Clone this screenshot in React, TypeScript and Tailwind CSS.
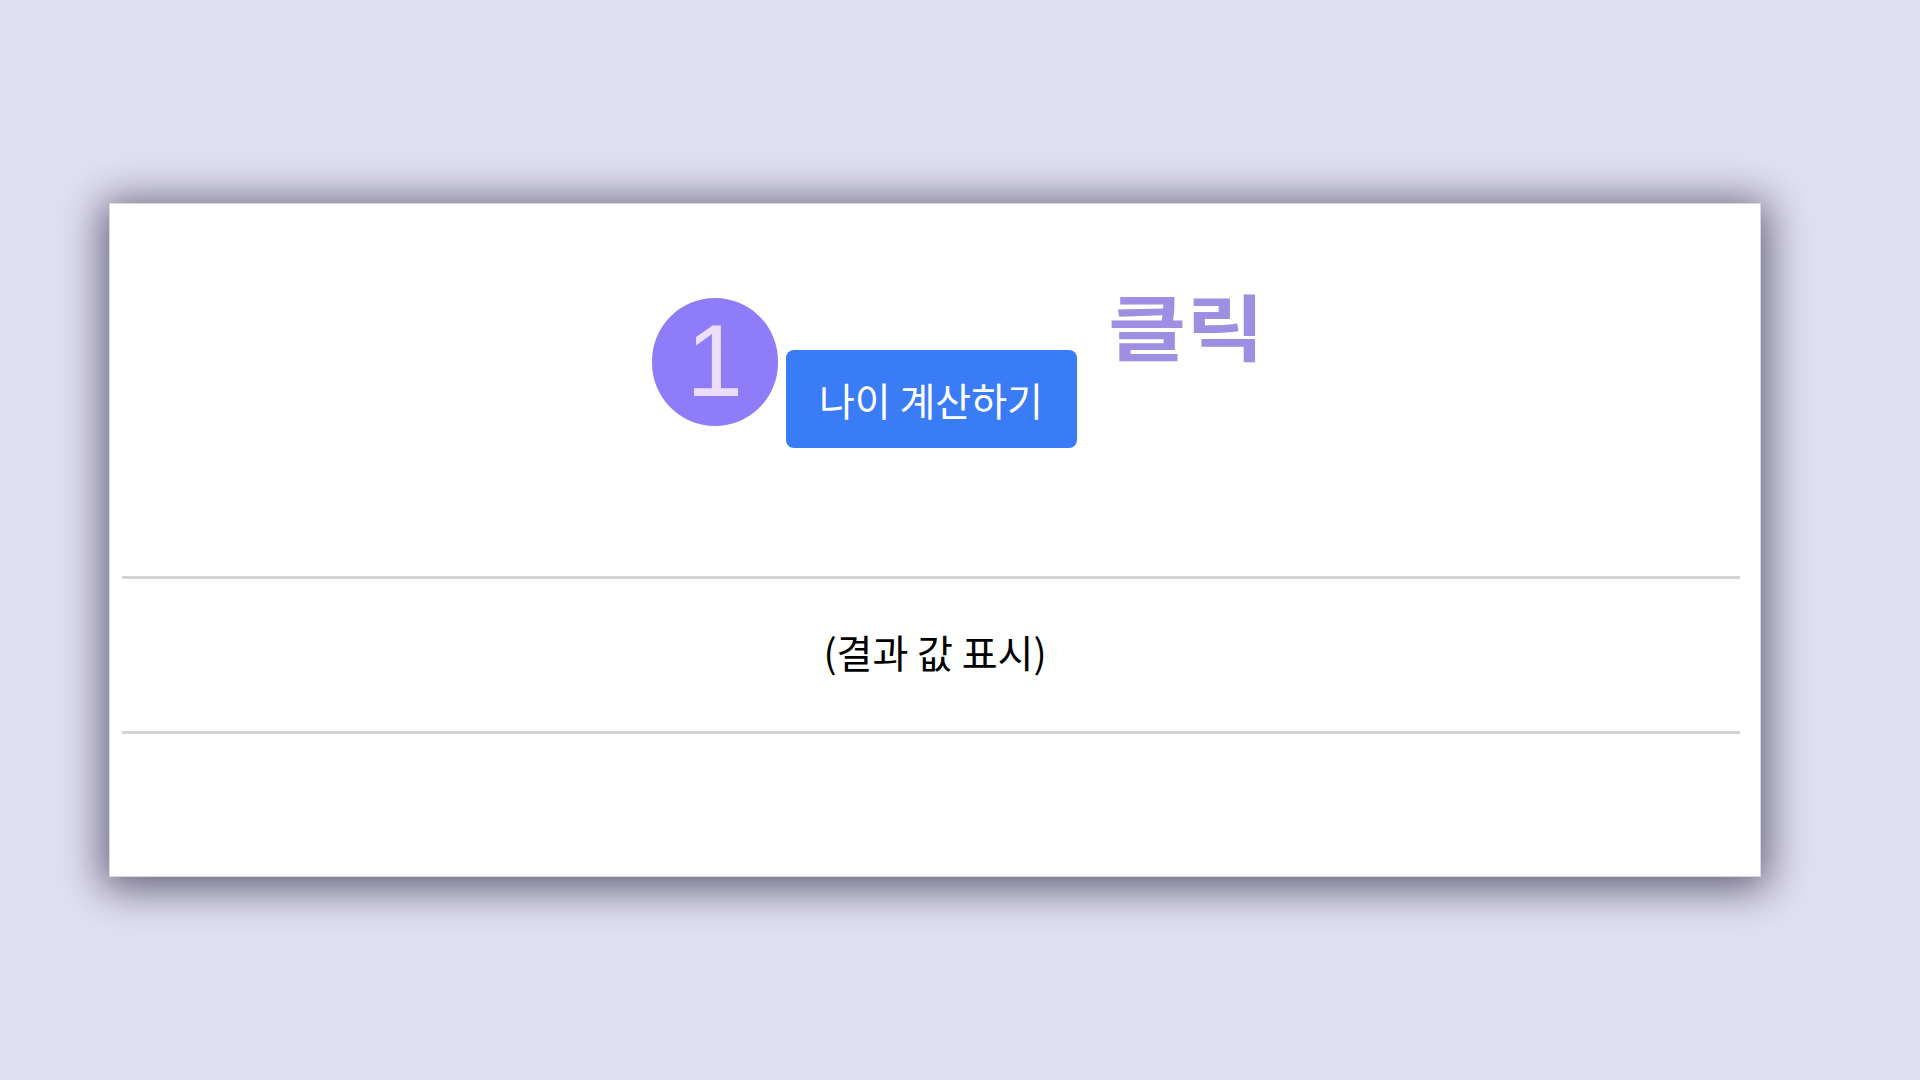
export default function App() {
  return (
    <main className="flex h-[1080px] w-[1920px] items-center bg-[#e1dff2] font-['Noto_Sans_CJK_KR','Noto_Sans',sans-serif]">
      <section className="ml-[109px] flex h-[674px] w-[1652px] flex-col border border-[#d9d8e4] bg-white shadow-[0_5px_40px_6px_rgba(10,8,30,0.6)]">
        <div className="flex justify-center pt-[146px] pr-[8px]">
          <div className="relative">
            <span
              aria-hidden="true"
              className="absolute -left-[134px] -top-[52px] flex h-[128px] w-[126px] items-center justify-center rounded-full bg-[#8f7cf8] pb-[2px] font-['Liberation_Sans',sans-serif] text-[102px] leading-none text-[#ebdffd]"
            >
              1
            </span>
            <button className="flex h-[98px] w-[291px] items-center justify-center rounded-[8px] bg-[#3a7bf6] text-[39px] leading-none text-white">
              나이 계산하기
            </button>
            <span className="absolute left-[322px] -top-[80px] origin-left scale-x-[1.18] whitespace-nowrap text-[72px] font-bold leading-normal text-[#9e8fe2]">
              클릭
            </span>
          </div>
        </div>

        <hr className="mt-[128px] ml-[12px] mr-[20px] h-[3px] border-0 bg-[#d3d3d3]" />
        <div className="flex h-[152px] items-center justify-center pb-[8px] text-[39px] text-black">
          (결과 값 표시)
        </div>
        <hr className="ml-[12px] mr-[20px] h-[3px] border-0 bg-[#d3d3d3]" />
      </section>
    </main>
  );
}
